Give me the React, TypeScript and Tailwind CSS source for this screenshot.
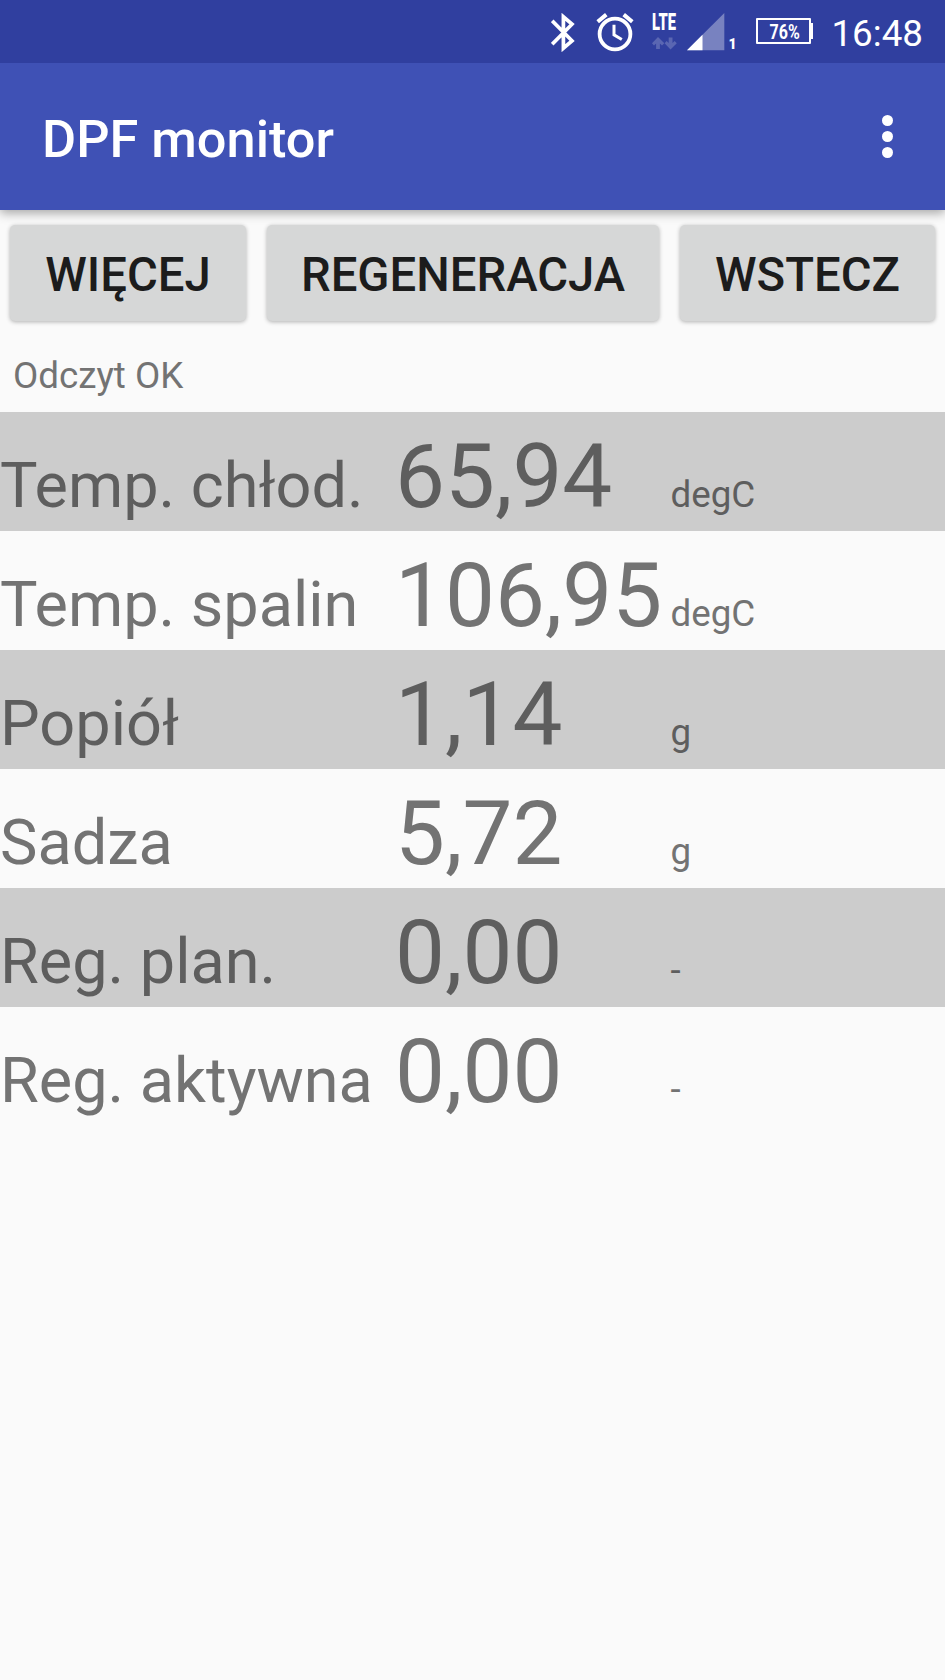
import clsx from "clsx";

type Reading = {
  label: string;
  value: string;
  unit: string;
};

const readings: Reading[] = [
  { label: "Temp. chłod.", value: "65,94", unit: "degC" },
  { label: "Temp. spalin", value: "106,95", unit: "degC" },
  { label: "Popiół", value: "1,14", unit: "g" },
  { label: "Sadza", value: "5,72", unit: "g" },
  { label: "Reg. plan.", value: "0,00", unit: "-" },
  { label: "Reg. aktywna", value: "0,00", unit: "-" },
];

function BluetoothIcon() {
  return (
    <svg className="h-[39px] w-[24px]" viewBox="0 0 24 39" fill="none" stroke="currentColor" strokeWidth="3.7">
      <path d="M1.2 7.8 L21 27.8 L12.4 35.2 V3.8 L21 11.2 L1.2 31.2" />
    </svg>
  );
}

function AlarmIcon() {
  return (
    <svg className="h-[39px] w-[38px]" viewBox="0 0 38 39" fill="none" stroke="currentColor">
      <circle cx="19" cy="21" r="15.4" strokeWidth="3.8" />
      <path d="M1.7 8.7 L10.3 1.6 M27.7 1.6 L36.3 8.7" strokeWidth="4" />
      <path d="M18 11.8 V21.8 L25.8 26.5" strokeWidth="3" />
    </svg>
  );
}

function SignalIcon() {
  return (
    <svg className="h-[38px] w-[38px]" viewBox="0 0 38 38" fill="currentColor">
      <path d="M37.3 0 V37.3 H0 Z" opacity="0.35" />
      <path d="M15.5 21.8 V37.3 H0 Z" />
    </svg>
  );
}

function DataArrows() {
  return (
    <svg className="h-[13px] w-[25px]" viewBox="0 0 25 13" fill="currentColor" opacity="0.2">
      <path d="M6 0 L12.3 6.3 L10 8.4 L7.9 6.4 V12 H4.1 V6.4 L2 8.4 L0 6.3 Z" />
      <path d="M18.5 12.4 L12.6 6.2 L14.6 4 L16.7 6 V0.5 H20.5 V6 L22.6 4 L24.8 6.2 Z" />
    </svg>
  );
}

function StatusBar() {
  return (
    <div className="relative z-10 flex h-[63px] items-start justify-end bg-[#303f9f] pr-[22px] pt-[13px] text-white">
      <BluetoothIcon />
      <div className="ml-[21px]">
        <AlarmIcon />
      </div>

      {/* NETWORK */}
      <div className="ml-[18px] flex w-[25px] flex-col">
        <span className="block h-[24px] origin-left scale-x-[0.64] text-[23px] font-black leading-[19px]">
          LTE
        </span>
        <DataArrows />
      </div>
      <div className="ml-[10px]">
        <SignalIcon />
      </div>
      <span className="ml-[3px] mt-[23px] w-[8px] text-[14px] font-black leading-[16px]">
        1
      </span>

      {/* BATTERY */}
      <div className="ml-[20px] mt-[5px] flex items-center">
        <div className="flex h-[26px] w-[55px] items-center justify-center rounded-[1px] border-2 border-current">
          <span className="scale-x-[0.8] pt-px pl-[2px] text-[20px] font-bold leading-none">76%</span>
        </div>
        <div className="h-[16px] w-[2px] bg-current" />
      </div>

      <span className="ml-[18px] text-[36.75px] leading-[41px]">16:48</span>
    </div>
  );
}

function Toolbar() {
  return (
    <header className="relative flex h-[147px] items-center justify-between bg-[#3f51b5] pl-[42px] pr-[52px] text-white shadow-[0_3px_10px_rgba(0,0,0,0.35)]">
      <h1 className="pt-[4px] text-[52.3px] font-medium leading-[62px]">DPF monitor</h1>
      <button className="flex flex-col gap-[4.5px]" aria-label="Menu">
        <span className="size-[11.5px] rounded-full bg-white" />
        <span className="size-[11.5px] rounded-full bg-white" />
        <span className="size-[11.5px] rounded-full bg-white" />
      </button>
    </header>
  );
}

function ActionButton({ children, className }: { children: string; className: string }) {
  return (
    <button
      className={clsx(
        "h-[96px] rounded-[5px] bg-[#d6d7d7] pt-[4px] text-[47.25px] font-medium leading-[56px] text-[#1c1c1c]",
        "shadow-[0_1px_4px_rgba(0,0,0,0.3)]",
        className
      )}
    >
      {children}
    </button>
  );
}

function ReadingRow({ label, value, unit, shaded }: Reading & { shaded: boolean }) {
  return (
    <div
      className={clsx(
        "grid h-[119px] grid-cols-[395px_275px_1fr] items-baseline whitespace-nowrap leading-[130px]",
        shaded ? "bg-[#cccccc] text-[#5e5e5e]" : "text-[#737373]"
      )}
    >
      <span className="text-[63px]">{label}</span>
      <span className="text-[88.9px]">{value}</span>
      <span className="pl-[0.5px] text-[36.75px]">{unit}</span>
    </div>
  );
}

export default function App() {
  return (
    <div className="h-[1680px] w-[945px] overflow-hidden bg-[#fafafa] font-['Roboto',sans-serif]">
      <StatusBar />
      <Toolbar />

      {/* ACTIONS */}
      <div className="flex gap-[21px] px-[10px] pt-[15px]">
        <ActionButton className="w-[236px]">WIĘCEJ</ActionButton>
        <ActionButton className="w-[392px]">REGENERACJA</ActionButton>
        <ActionButton className="w-[255px]">WSTECZ</ActionButton>
      </div>

      <p className="h-[91px] pl-[13px] pt-[33px] text-[36.75px] leading-[43px] text-[#737373]">
        Odczyt OK
      </p>

      {/* READINGS */}
      {readings.map((reading, index) => (
        <ReadingRow key={reading.label} {...reading} shaded={index % 2 === 0} />
      ))}
    </div>
  );
}
